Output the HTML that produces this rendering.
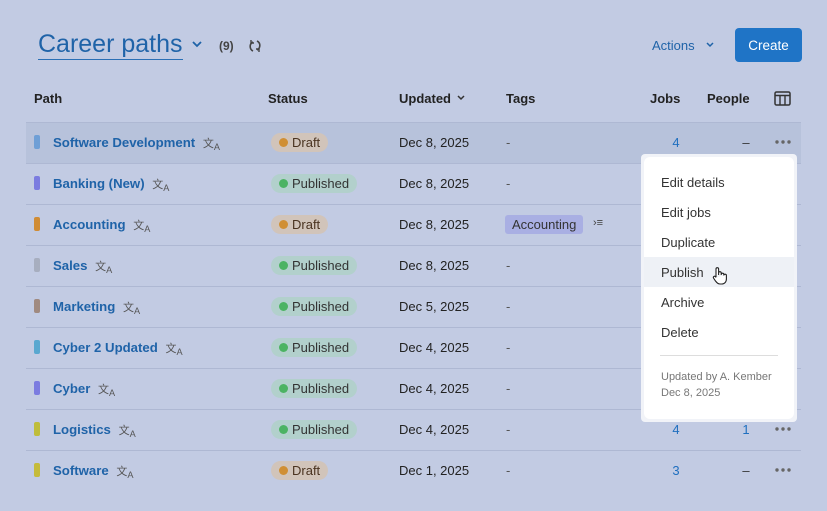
<!DOCTYPE html>
<html><head><meta charset="utf-8"><style>
*{box-sizing:border-box;margin:0;padding:0}
body{width:827px;height:511px;background:#c2cbe3;font-family:"Liberation Sans",sans-serif;position:relative;overflow:hidden;color:#222}
.a{position:absolute}
.title{left:38px;top:29px;font-size:25px;color:#1f63a8;border-bottom:1.5px solid #2a6fb5;line-height:30px}
.hd{top:91px;font-size:13px;font-weight:bold;color:#222}
.line{left:26px;width:775px;height:1px;background:#aeb8d3}
.bar{left:34px;width:6px;height:14px;border-radius:2px}
.nm{left:53px;font-size:13.2px;font-weight:bold;color:#1f63a8}
.nm span{font-weight:normal;color:#555;font-size:11px;margin-left:4px}
.pill{left:271px;height:19px;border-radius:10px;font-size:13px;padding:0 8px 0 21px;line-height:19px;color:#333}
.pill:before{content:"";position:absolute;left:8px;top:5px;width:9px;height:9px;border-radius:50%}
.dr{background:#d1c4ba;color:#4a3320}.dr:before{background:#d08f34}
.pb{background:#b2d0cc}.pb:before{background:#4cb363}
.dt{left:399px;font-size:13px;color:#222}
.tg{left:506px;font-size:13px;color:#555}
.jb{font-size:13px;color:#1f6fbf;width:20px;text-align:center}
.pp{font-size:13px;color:#333;width:20px;text-align:center}
.dots{left:775px;width:16px;height:4px}
.menu{left:641px;top:154px;width:156px;height:268px;background:#f1f3f8;border-radius:4px}
.mi{left:661px;font-size:13px;color:#333}
</style></head><body>
<div class="a title">Career paths</div>
<svg class="a" style="left:191px;top:40px" width="12" height="8"><path d="M2 2l4 4 4-4" stroke="#1f63a8" stroke-width="1.8" fill="none"/></svg>
<div class="a" style="left:219px;top:39px;font-size:12px;color:#444;font-weight:bold">(9)</div>
<svg class="a" style="left:248px;top:39px" width="14" height="14"><path d="M5 3A5 5 0 0 0 5 12M9 2A5 5 0 0 1 9 11" stroke="#444" stroke-width="1.6" fill="none"/><path d="M3 1v3h3M11 13v-3H8" stroke="#444" stroke-width="1.4" fill="none"/></svg>
<div class="a" style="left:652px;top:38px;font-size:13px;color:#1f63a8">Actions</div>
<svg class="a" style="left:705px;top:41px" width="10" height="8"><path d="M2 2l3 3 3-3" stroke="#1f63a8" stroke-width="1.5" fill="none"/></svg>
<div class="a" style="left:735px;top:28px;width:67px;height:34px;background:#1f74c6;border-radius:4px;color:#fff;font-size:13.5px;text-align:center;line-height:34px;padding-top:1px">Create</div>

<div class="a hd" style="left:34px">Path</div>
<div class="a hd" style="left:268px">Status</div>
<div class="a hd" style="left:399px">Updated</div>
<svg class="a" style="left:456px;top:94px" width="10" height="8"><path d="M2 2l3 3 3-3" stroke="#333" stroke-width="1.5" fill="none"/></svg>
<div class="a hd" style="left:506px">Tags</div>
<div class="a hd" style="left:650px">Jobs</div>
<div class="a hd" style="left:707px">People</div>
<svg class="a" style="left:774px;top:91px" width="17" height="15"><rect x="1" y="1" width="15" height="13" rx="1.5" stroke="#333" stroke-width="1.5" fill="none"/><path d="M1 4.5h15M6 4.5v9M11 4.5v9" stroke="#333" stroke-width="1.4"/></svg>

<div class="a" style="left:26px;top:122px;width:775px;height:41px;background:#b7c2db"></div>
<div class="a line" style="top:122px"></div><div class="a line" style="top:163px"></div><div class="a line" style="top:204px"></div><div class="a line" style="top:245px"></div><div class="a line" style="top:286px"></div><div class="a line" style="top:327px"></div><div class="a line" style="top:368px"></div><div class="a line" style="top:409px"></div><div class="a line" style="top:450px"></div>

<div class="a bar" style="top:135px;background:#6f9fd6"></div><div class="a nm" style="top:135px">Software Development <span>文<sub>A</sub></span></div><div class="a pill dr" style="top:133px">Draft</div><div class="a dt" style="top:135px">Dec 8, 2025</div><div class="a tg" style="top:135px">-</div><div class="a jb" style="left:666px;top:135px">4</div><div class="a pp" style="left:736px;top:135px">–</div><svg class="a dots" style="top:140px"><circle cx="2" cy="2" r="1.7" fill="#666"/><circle cx="8" cy="2" r="1.7" fill="#666"/><circle cx="14" cy="2" r="1.7" fill="#666"/></svg>

<div class="a bar" style="top:176px;background:#7b7ce0"></div><div class="a nm" style="top:176px">Banking (New) <span>文<sub>A</sub></span></div><div class="a pill pb" style="top:174px">Published</div><div class="a dt" style="top:176px">Dec 8, 2025</div><div class="a tg" style="top:176px">-</div>

<div class="a bar" style="top:217px;background:#d08c35"></div><div class="a nm" style="top:217px">Accounting <span>文<sub>A</sub></span></div><div class="a pill dr" style="top:215px">Draft</div><div class="a dt" style="top:217px">Dec 8, 2025</div><div class="a" style="left:505px;top:215px;height:19px;padding:0 7px;background:#a9afe3;border-radius:3px;font-size:13px;line-height:19px;color:#333">Accounting</div><div class="a" style="left:593px;top:217px;font-size:11px;color:#444">›≡</div>

<div class="a bar" style="top:258px;background:#a7aebf"></div><div class="a nm" style="top:258px">Sales <span>文<sub>A</sub></span></div><div class="a pill pb" style="top:256px">Published</div><div class="a dt" style="top:258px">Dec 8, 2025</div><div class="a tg" style="top:258px">-</div>

<div class="a bar" style="top:299px;background:#a08a80"></div><div class="a nm" style="top:299px">Marketing <span>文<sub>A</sub></span></div><div class="a pill pb" style="top:297px">Published</div><div class="a dt" style="top:299px">Dec 5, 2025</div><div class="a tg" style="top:299px">-</div>

<div class="a bar" style="top:340px;background:#5aa8d0"></div><div class="a nm" style="top:340px">Cyber 2 Updated <span>文<sub>A</sub></span></div><div class="a pill pb" style="top:338px">Published</div><div class="a dt" style="top:340px">Dec 4, 2025</div><div class="a tg" style="top:340px">-</div>

<div class="a bar" style="top:381px;background:#7b7ce0"></div><div class="a nm" style="top:381px">Cyber <span>文<sub>A</sub></span></div><div class="a pill pb" style="top:379px">Published</div><div class="a dt" style="top:381px">Dec 4, 2025</div><div class="a tg" style="top:381px">-</div>

<div class="a bar" style="top:422px;background:#bfbd3a"></div><div class="a nm" style="top:422px">Logistics <span>文<sub>A</sub></span></div><div class="a pill pb" style="top:420px">Published</div><div class="a dt" style="top:422px">Dec 4, 2025</div><div class="a tg" style="top:422px">-</div><div class="a jb" style="left:666px;top:422px">4</div><div class="a jb" style="left:736px;top:422px">1</div><svg class="a dots" style="top:427px"><circle cx="2" cy="2" r="1.7" fill="#666"/><circle cx="8" cy="2" r="1.7" fill="#666"/><circle cx="14" cy="2" r="1.7" fill="#666"/></svg>

<div class="a bar" style="top:463px;background:#c5bb3a"></div><div class="a nm" style="top:463px">Software <span>文<sub>A</sub></span></div><div class="a pill dr" style="top:461px">Draft</div><div class="a dt" style="top:463px">Dec 1, 2025</div><div class="a tg" style="top:463px">-</div><div class="a jb" style="left:666px;top:463px">3</div><div class="a pp" style="left:736px;top:463px">–</div><svg class="a dots" style="top:468px"><circle cx="2" cy="2" r="1.7" fill="#666"/><circle cx="8" cy="2" r="1.7" fill="#666"/><circle cx="14" cy="2" r="1.7" fill="#666"/></svg>

<div class="a menu"></div>
<div class="a" style="left:644px;top:157px;width:150px;height:262px;background:#fff;border-radius:6px"></div>
<div class="a" style="left:644px;top:257px;width:150px;height:30px;background:#eef1f6"></div>
<div class="a mi" style="top:175px">Edit details</div>
<div class="a mi" style="top:205px">Edit jobs</div>
<div class="a mi" style="top:235px">Duplicate</div>
<div class="a mi" style="top:265px">Publish</div>
<div class="a mi" style="top:295px">Archive</div>
<div class="a mi" style="top:325px">Delete</div>
<div class="a" style="left:660px;top:355px;width:118px;height:1px;background:#ddd"></div>
<div class="a" style="left:661px;top:369px;font-size:11px;color:#777;line-height:16px">Updated by A. Kember<br>Dec 8, 2025</div>
<svg class="a" style="left:712px;top:266px" width="16" height="20"><path d="M4 11V3a1.3 1.3 0 0 1 2.6 0v6M6.6 8.5V7a1.3 1.3 0 0 1 2.6 0v2M9.2 8.5a1.3 1.3 0 0 1 2.6 0v1M11.8 9.5a1.3 1.3 0 0 1 2.6 0v3.5c0 3-2 5-4.5 5H8c-2 0-3-1-4.5-3L1.5 12a1.2 1.2 0 0 1 2-1.3L4 11.5" fill="#fff" stroke="#222" stroke-width="1.1"/></svg>
</body></html>
